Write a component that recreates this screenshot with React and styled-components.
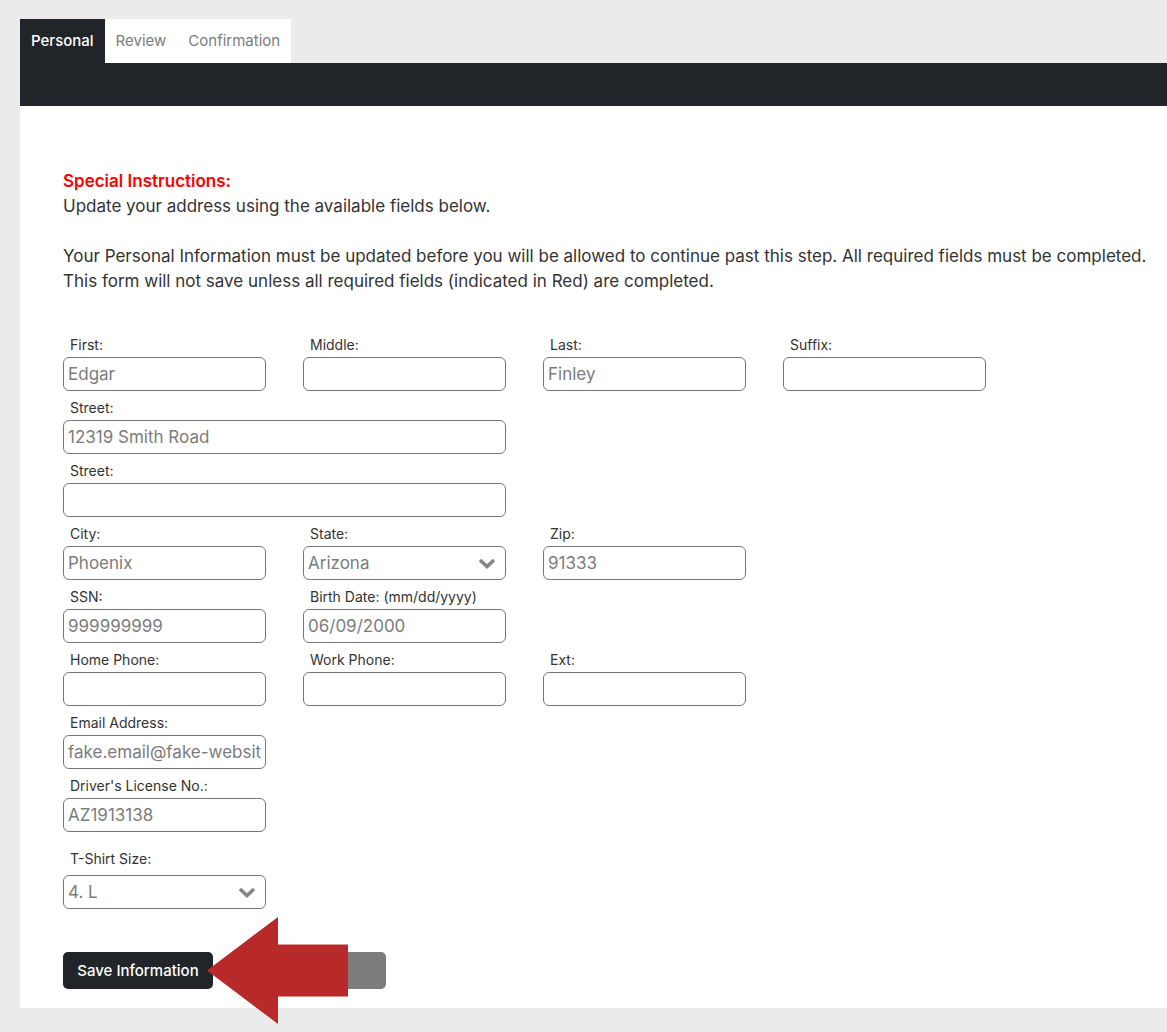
import React from "react";
import styled, { createGlobalStyle } from "styled-components";

const GlobalStyle = createGlobalStyle`
  *, *::before, *::after { box-sizing: border-box; }
  body {
    margin: 0;
    background: #ebebeb;
    color: #333333;
    font-family: Inter, Roboto, "Liberation Sans", sans-serif;
    font-size: 17px;
    line-height: 25px;
  }
  button, input, select { font: inherit; }
`;

const Page = styled.div`
  padding: 19px 0 24px 20px;
`;

const Tabs = styled.nav`
  display: flex;
`;

const Tab = styled.a`
  height: 44px;
  padding: 0 11px;
  font-size: 15px;
  line-height: 44px;
  text-decoration: none;
  white-space: nowrap;
  font-weight: ${(p) => (p.$active ? 500 : 400)};
  color: ${(p) => (p.$active ? "#ffffff" : "#7c7c7c")};
  background: ${(p) => (p.$active ? "#212529" : "#ffffff")};
`;

const Bar = styled.div`
  height: 43px;
  background: #212529;
`;

const Panel = styled.main`
  padding: 63px 16px 19px 43px;
  background: #ffffff;
`;

const Notice = styled.section`
  margin-bottom: 42px;
`;

const NoticeTitle = styled.h1`
  margin: 0;
  font-size: 17px;
  line-height: 25px;
  font-weight: 600;
  color: #ff0000;
`;

const Text = styled.p`
  margin: 0 0 ${(p) => (p.$spaced ? 25 : 0)}px;
`;

const Fields = styled.div`
  display: grid;
  grid-template-columns: repeat(4, minmax(0, 203px));
  gap: 8px 37px;
`;

const Field = styled.div`
  display: flex;
  flex-direction: column;
  gap: ${(p) => (p.$loose ? 7 : 3)}px;
  margin-top: ${(p) => (p.$loose ? 10 : 0)}px;
  grid-column: ${(p) => (p.$first ? "1 / " : "")}span ${(p) => p.$span || 1};
`;

const Label = styled.label`
  padding-left: 7px;
  font-size: 14px;
  line-height: 18px;
`;

const Input = styled.input`
  width: 100%;
  height: 34px;
  padding: 0 4px;
  border: 1px solid #767676;
  border-radius: 6px;
  background: #ffffff;
  color: #7c7c7c;
`;

const SelectBox = styled.div`
  position: relative;
`;

const Select = styled.select`
  display: block;
  width: 100%;
  height: 34px;
  padding: 0 32px 0 4px;
  border: 1px solid #767676;
  border-radius: 6px;
  background: #ffffff;
  color: #7c7c7c;
  appearance: none;
`;

const Chevron = styled.svg`
  position: absolute;
  top: 11px;
  right: 10px;
  width: 18px;
  height: 13px;
  pointer-events: none;
`;

const Actions = styled.div`
  position: relative;
  display: flex;
  gap: 16px;
  margin-top: 43px;
`;

const Button = styled.button`
  height: 37px;
  min-width: ${(p) => (p.$muted ? 157 : 150)}px;
  padding: 0 14px;
  border: 0;
  border-radius: 5px;
  font-size: 15px;
  font-weight: 500;
  white-space: nowrap;
  color: #ffffff;
  background: ${(p) => (p.$muted ? "#7c7c7c" : "#212529")};
`;

const Arrow = styled.svg`
  position: absolute;
  left: 144px;
  top: -35px;
  width: 141px;
  height: 107px;
  pointer-events: none;
`;

const fields = [
  { id: "first", label: "First:", value: "Edgar", first: true },
  { id: "middle", label: "Middle:" },
  { id: "last", label: "Last:", value: "Finley" },
  { id: "suffix", label: "Suffix:" },
  { id: "street1", label: "Street:", value: "12319 Smith Road", first: true, span: 2 },
  { id: "street2", label: "Street:", first: true, span: 2 },
  { id: "city", label: "City:", value: "Phoenix", first: true },
  { id: "state", label: "State:", value: "Arizona", select: true },
  { id: "zip", label: "Zip:", value: "91333" },
  { id: "ssn", label: "SSN:", value: "999999999", first: true },
  { id: "birth", label: "Birth Date: (mm/dd/yyyy)", value: "06/09/2000" },
  { id: "home", label: "Home Phone:", first: true },
  { id: "work", label: "Work Phone:" },
  { id: "ext", label: "Ext:" },
  { id: "email", label: "Email Address:", value: "fake.email@fake-websit", first: true },
  { id: "license", label: "Driver's License No.:", value: "AZ1913138", first: true },
  { id: "shirt", label: "T-Shirt Size:", value: "4. L", select: true, first: true, loose: true },
];

function FormField({ id, label, value = "", select, first, span, loose }) {
  return (
    <Field $first={first} $span={span} $loose={loose}>
      <Label htmlFor={id}>{label}</Label>
      {select ? (
        <SelectBox>
          <Select id={id} defaultValue={value}>
            <option>{value}</option>
          </Select>
          <Chevron viewBox="0 0 18 13" aria-hidden="true">
            <path d="M2 3 L9 9.5 L16 3" fill="none" stroke="#858585" strokeWidth="3.6" />
          </Chevron>
        </SelectBox>
      ) : (
        <Input id={id} type="text" defaultValue={value} />
      )}
    </Field>
  );
}

export default function App() {
  return (
    <>
      <GlobalStyle />
      <Page>
        <Tabs>
          <Tab href="#personal" $active aria-current="step">Personal</Tab>
          <Tab href="#review">Review</Tab>
          <Tab href="#confirmation">Confirmation</Tab>
        </Tabs>
        <Bar />
        <Panel>
          <Notice>
            <NoticeTitle>Special Instructions:</NoticeTitle>
            <Text $spaced>Update your address using the available fields below.</Text>
            <Text>
              Your Personal Information must be updated before you will be allowed to continue past
              this step. All required fields must be completed.
              <br />
              This form will not save unless all required fields (indicated in Red) are completed.
            </Text>
          </Notice>
          <form onSubmit={(e) => e.preventDefault()}>
            <Fields>
              {fields.map((f) => (
                <FormField key={f.id} {...f} />
              ))}
            </Fields>
            <Actions>
              <Button type="submit">Save Information</Button>
              <Button type="button" $muted aria-label="Cancel" />
              <Arrow viewBox="0 0 141 107" aria-hidden="true">
                <path d="M0 53.5 L71 0 V27.5 H141 V79.5 H71 V107 Z" fill="#b82a2a" />
              </Arrow>
            </Actions>
          </form>
        </Panel>
      </Page>
    </>
  );
}
